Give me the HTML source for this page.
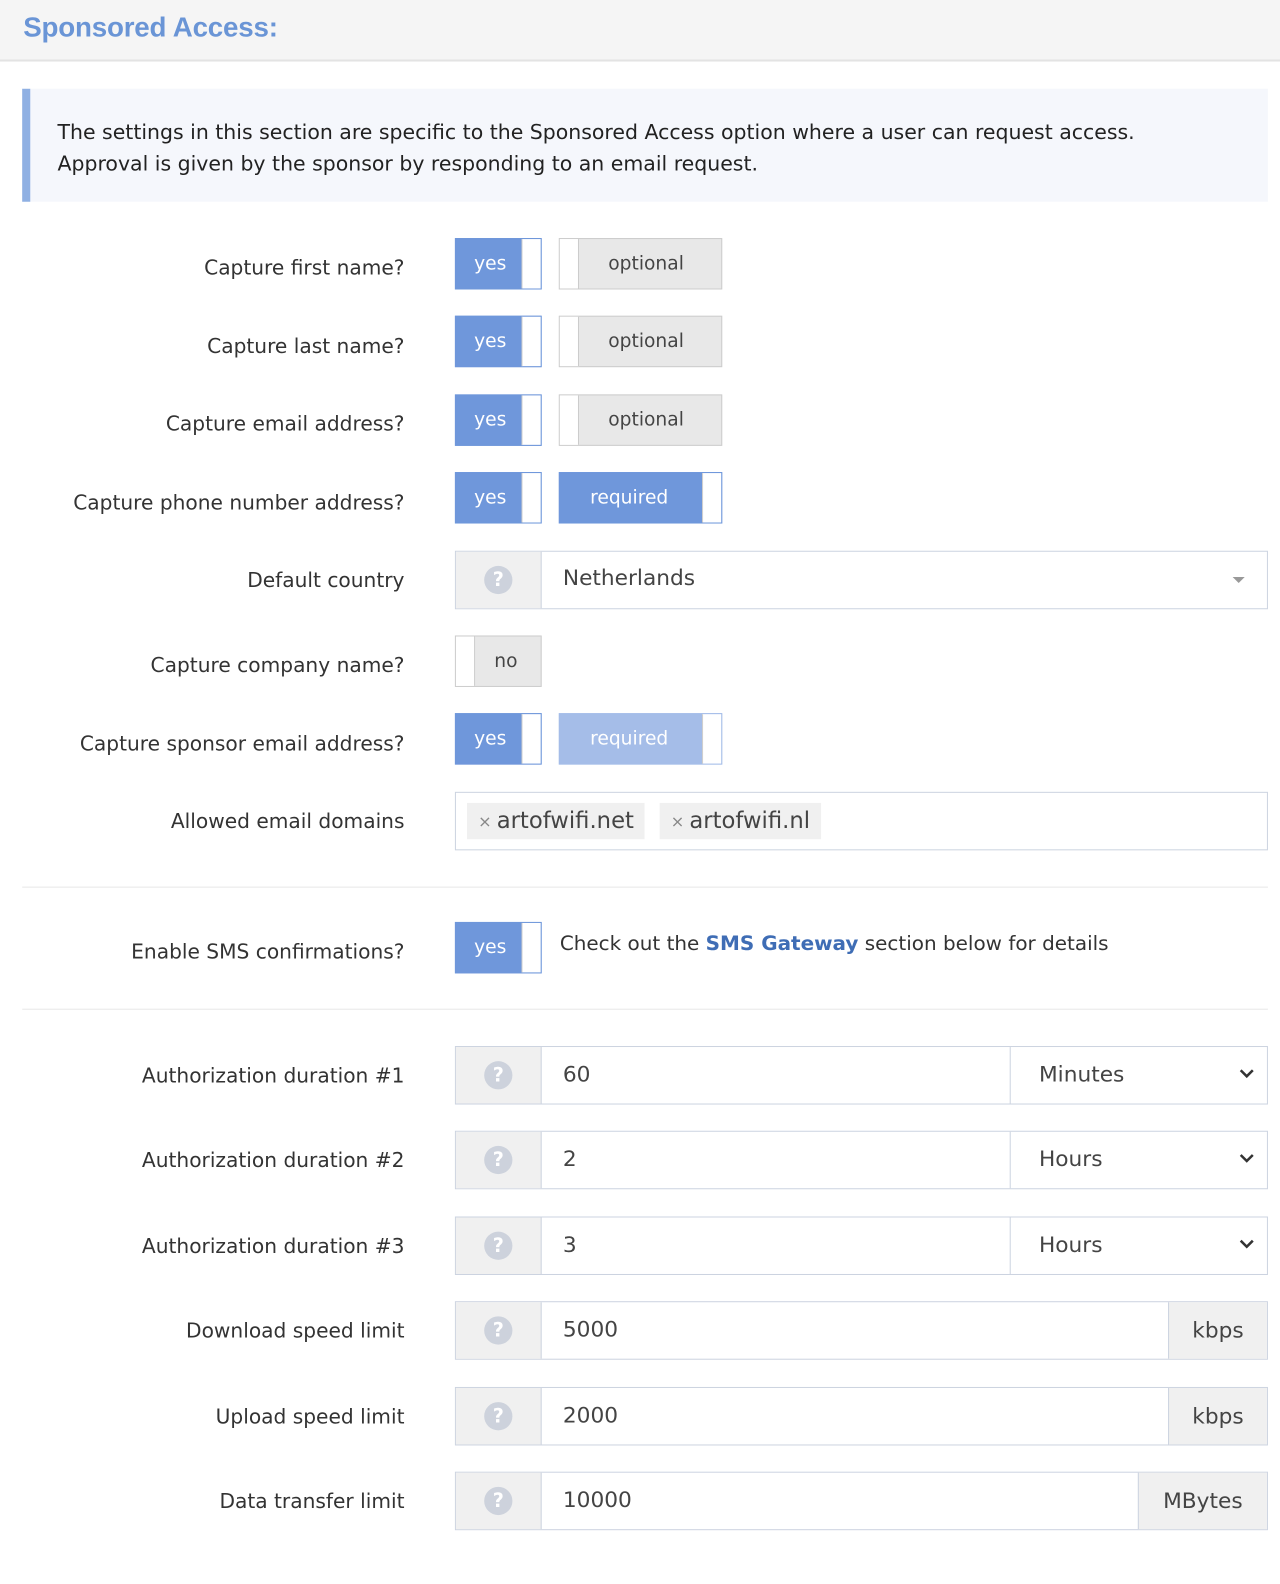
<!DOCTYPE html>
<html><head><meta charset="utf-8"><style>
*{box-sizing:border-box;margin:0;padding:0}
body{width:1280px;height:1582px;background:#fff;font-family:"DejaVu Sans","Liberation Sans",sans-serif;color:#333;position:relative;overflow:hidden}
#w{position:absolute;left:0;top:0;width:1270px;height:1570px;transform:scale(1.0087);transform-origin:0 0}
.a{position:absolute}
.hdr{left:0;top:0;width:1280px;height:61px;background:#f5f5f5;border-bottom:2px solid #e3e3e3}
.title{left:23px;top:11px;font-family:"Liberation Sans",sans-serif;font-size:27.5px;font-weight:bold;color:#6a95d6;letter-spacing:-0.2px}
.info{left:22px;top:88px;width:1235px;height:112px;background:#f5f7fc;border-left:8px solid #8fb0e3;padding:28px 0 0 27px;font-size:20.3px;line-height:31px;color:#222}
.lbl{right:869px;font-size:20px;color:#333;text-align:right;white-space:nowrap;transform:translateY(-50%)}
.tg{height:51px;border:1px solid #6f97db;background:#6f97db;color:#fff;font-size:18.5px;display:flex;align-items:center}
.tg .k{position:absolute;right:0;top:0;bottom:0;width:19px;background:#fff;border-left:1px solid #ccc}
.tg.off{background:#e8e8e8;border-color:#ccc;color:#444}
.tg.off .k{left:0;right:auto;border-left:none;border-right:1px solid #ccc}
.tg.light{background:#a5bde8;border-color:#a5bde8}
.inp{height:58px;border:1px solid #ccd3e0;background:#fff;font-size:21.5px;color:#444}
.ad{position:absolute;top:0;bottom:0;background:#f0f0f0;display:flex;align-items:center;justify-content:center}
.q{width:28px;height:28px;border-radius:50%;background:#cdd2dc;color:#fff;font-weight:bold;font-size:19px;display:flex;align-items:center;justify-content:center}
.hr{left:22px;width:1235px;height:1px;background:#e8e8e8}
.tag{background:#f0f0f0;height:36px;top:10px;font-size:22.5px;color:#444;display:flex;align-items:center;padding:0 11px}
.tag small{font-size:16px;color:#888;margin-right:5px}
.chev{right:12px;top:20px}
</style></head><body><div id="w">
<div class="a hdr"></div>
<div class="a title">Sponsored Access:</div>
<div class="a info">The settings in this section are specific to the Sponsored Access option where a user can request access.<br>Approval is given by the sponsor by responding to an email request.</div>

<div class="a lbl" style="top:265px">Capture first name?</div>
<div class="a tg" style="left:451px;top:236px;width:86px"><span style="padding-left:18px">yes</span><span class="k"></span></div>
<div class="a tg off" style="left:554px;top:236px;width:162px"><span style="padding-left:48px">optional</span><span class="k"></span></div>

<div class="a lbl" style="top:343px">Capture last name?</div>
<div class="a tg" style="left:451px;top:313px;width:86px"><span style="padding-left:18px">yes</span><span class="k"></span></div>
<div class="a tg off" style="left:554px;top:313px;width:162px"><span style="padding-left:48px">optional</span><span class="k"></span></div>

<div class="a lbl" style="top:420px">Capture email address?</div>
<div class="a tg" style="left:451px;top:391px;width:86px"><span style="padding-left:18px">yes</span><span class="k"></span></div>
<div class="a tg off" style="left:554px;top:391px;width:162px"><span style="padding-left:48px">optional</span><span class="k"></span></div>

<div class="a lbl" style="top:498px">Capture phone number address?</div>
<div class="a tg" style="left:451px;top:468px;width:86px"><span style="padding-left:18px">yes</span><span class="k"></span></div>
<div class="a tg" style="left:554px;top:468px;width:162px"><span style="padding-left:30px">required</span><span class="k"></span></div>

<div class="a lbl" style="top:575px">Default country</div>
<div class="a inp" style="left:451px;top:546px;width:806px">
 <div class="ad" style="left:0;width:85px;border-right:1px solid #ccd3e0"><div class="q">?</div></div>
 <div class="a" style="left:106px;top:14px">Netherlands</div>
 <div class="a" style="right:22px;top:25px;width:0;height:0;border-left:6px solid transparent;border-right:6px solid transparent;border-top:6px solid #999"></div>
</div>

<div class="a lbl" style="top:659px">Capture company name?</div>
<div class="a tg off" style="left:451px;top:630px;width:86px"><span style="padding-left:38px">no</span><span class="k"></span></div>

<div class="a lbl" style="top:737px">Capture sponsor email address?</div>
<div class="a tg" style="left:451px;top:707px;width:86px"><span style="padding-left:18px">yes</span><span class="k"></span></div>
<div class="a tg light" style="left:554px;top:707px;width:162px"><span style="padding-left:30px">required</span><span class="k"></span></div>

<div class="a lbl" style="top:814px">Allowed email domains</div>
<div class="a inp" style="left:451px;top:785px;width:806px">
 <div class="a tag" style="left:11px"><small>×</small>artofwifi.net</div>
 <div class="a tag" style="left:202px"><small>×</small>artofwifi.nl</div>
</div>

<div class="a hr" style="top:879px"></div>
<div class="a lbl" style="top:943px">Enable SMS confirmations?</div>
<div class="a tg" style="left:451px;top:914px;width:86px"><span style="padding-left:18px">yes</span><span class="k"></span></div>
<div class="a" style="left:555px;top:924px;font-size:19.8px;color:#333">Check out the <b style="color:#3f6db5">SMS Gateway</b> section below for details</div>
<div class="a hr" style="top:1000px"></div>

<div class="a lbl" style="top:1066px">Authorization duration #1</div>
<div class="a inp" style="left:451px;top:1037px;width:806px">
 <div class="ad" style="left:0;width:85px;border-right:1px solid #ccd3e0"><div class="q">?</div></div>
 <div class="a" style="left:106px;top:15px">60</div>
 <div class="a" style="left:549px;top:0;bottom:0;border-left:1px solid #ccd3e0"></div>
 <div class="a" style="left:578px;top:15px">Minutes</div>
 <svg class="a chev" width="16" height="12" viewBox="0 0 16 12"><path d="M2 3l6 6 6-6" fill="none" stroke="#333" stroke-width="2.5"/></svg>
</div>

<div class="a lbl" style="top:1150px">Authorization duration #2</div>
<div class="a inp" style="left:451px;top:1121px;width:806px">
 <div class="ad" style="left:0;width:85px;border-right:1px solid #ccd3e0"><div class="q">?</div></div>
 <div class="a" style="left:106px;top:15px">2</div>
 <div class="a" style="left:549px;top:0;bottom:0;border-left:1px solid #ccd3e0"></div>
 <div class="a" style="left:578px;top:15px">Hours</div>
 <svg class="a chev" width="16" height="12" viewBox="0 0 16 12"><path d="M2 3l6 6 6-6" fill="none" stroke="#333" stroke-width="2.5"/></svg>
</div>

<div class="a lbl" style="top:1235px">Authorization duration #3</div>
<div class="a inp" style="left:451px;top:1206px;width:806px">
 <div class="ad" style="left:0;width:85px;border-right:1px solid #ccd3e0"><div class="q">?</div></div>
 <div class="a" style="left:106px;top:15px">3</div>
 <div class="a" style="left:549px;top:0;bottom:0;border-left:1px solid #ccd3e0"></div>
 <div class="a" style="left:578px;top:15px">Hours</div>
 <svg class="a chev" width="16" height="12" viewBox="0 0 16 12"><path d="M2 3l6 6 6-6" fill="none" stroke="#333" stroke-width="2.5"/></svg>
</div>

<div class="a lbl" style="top:1319px">Download speed limit</div>
<div class="a inp" style="left:451px;top:1290px;width:806px">
 <div class="ad" style="left:0;width:85px;border-right:1px solid #ccd3e0"><div class="q">?</div></div>
 <div class="a" style="left:106px;top:15px">5000</div>
 <div class="ad" style="right:0;width:98px;border-left:1px solid #ccd3e0">kbps</div>
</div>

<div class="a lbl" style="top:1404px">Upload speed limit</div>
<div class="a inp" style="left:451px;top:1375px;width:806px">
 <div class="ad" style="left:0;width:85px;border-right:1px solid #ccd3e0"><div class="q">?</div></div>
 <div class="a" style="left:106px;top:15px">2000</div>
 <div class="ad" style="right:0;width:98px;border-left:1px solid #ccd3e0">kbps</div>
</div>

<div class="a lbl" style="top:1488px">Data transfer limit</div>
<div class="a inp" style="left:451px;top:1459px;width:806px">
 <div class="ad" style="left:0;width:85px;border-right:1px solid #ccd3e0"><div class="q">?</div></div>
 <div class="a" style="left:106px;top:15px">10000</div>
 <div class="ad" style="right:0;width:128px;border-left:1px solid #ccd3e0">MBytes</div>
</div>
</div></body></html>
